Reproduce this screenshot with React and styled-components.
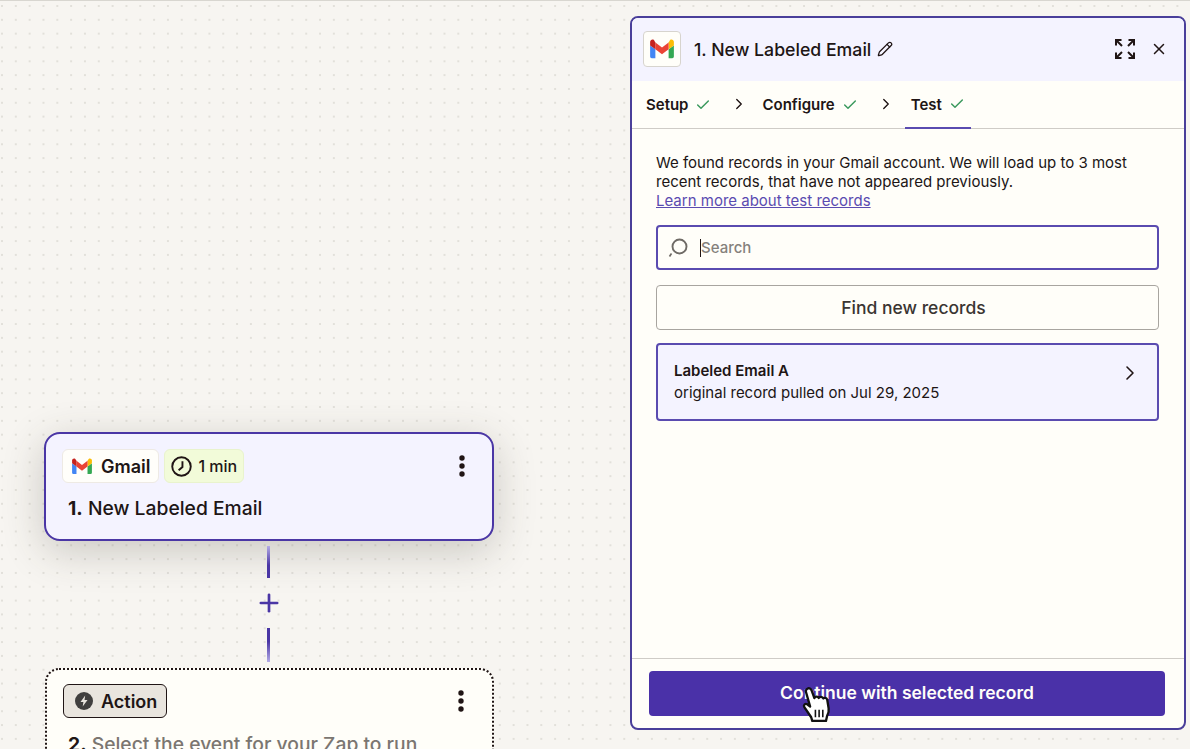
import React from "react";
import styled, { createGlobalStyle } from "styled-components";
import { Check, ChevronRight, Pencil, X, Plus } from "lucide-react";

const GlobalStyle = createGlobalStyle`
  html, body {
    margin: 0;
    padding: 0;
    height: 749px;
    overflow: hidden;
    font-family: Inter, "Liberation Sans", sans-serif;
    color: #201515;
  }
`;

const Page = styled.div`
  display: flex;
  width: 1190px;
  height: 749px;
  overflow: hidden;
  box-sizing: border-box;
  border-top: 1px solid #d8d6d0;
  background-color: #f7f5f1;
  background-image: radial-gradient(circle at 1px 1px, #e2e0da 0.8px, transparent 1.1px);
  background-size: 13.83px 13.83px;
  background-position: 1px 4px;
`;

const Canvas = styled.div`
  width: 630px;
  flex: none;
  box-sizing: border-box;
  padding: 431px 0 0 44px;
`;

const TriggerNode = styled.div`
  width: 450px;
  height: 109px;
  box-sizing: border-box;
  padding: 15px 16px 0 16px;
  background: #f4f3ff;
  border: 2px solid #4a36a5;
  border-radius: 16px;
  box-shadow: 0 10px 42px rgba(60, 55, 40, 0.24);
`;

const NodeTop = styled.div`
  display: flex;
  align-items: center;
  gap: 5px;
`;

const Chip = styled.div`
  display: flex;
  align-items: center;
  height: 34px;
  box-sizing: border-box;
  gap: ${(p) => p.$gap || 8}px;
  padding: 0 ${(p) => p.$padRight || p.$pad || 9}px 0 ${(p) => p.$pad || 9}px;
  border-radius: 6px;
  background: ${(p) => p.$bg || "#fffefa"};
  border: 1px solid ${(p) => p.$line || "#eeeae4"};
  font-size: ${(p) => p.$size || 18}px;
  font-weight: ${(p) => p.$weight || 600};
`;

const MoreButton = styled.div`
  margin-left: auto;
  display: flex;
  margin-right: ${(p) => p.$right || 10}px;
`;

const NodeTitle = styled.div`
  margin: ${(p) => p.$top}px 0 0 ${(p) => p.$left}px;
  font-size: 19.3px;
  font-weight: 500;
  line-height: 24px;
  white-space: nowrap;
  color: ${(p) => (p.$muted ? "#7b7671" : "#201515")};
  b {
    font-weight: 700;
    color: #201515;
  }
`;

const Connector = styled.div`
  width: 450px;
  height: 127px;
  display: flex;
  flex-direction: column;
  align-items: center;
  padding: 5px 1px 0 0;
  box-sizing: border-box;
  color: #4a36a5;
`;

const Line = styled.div`
  width: 3px;
  height: ${(p) => p.$h}px;
  background: linear-gradient(${(p) => p.$dir}, #4a36a5 40%, #b3abe6);
`;

const PlusSlot = styled.div`
  height: 50px;
  display: flex;
  align-items: center;
  justify-content: center;
`;

const ActionNode = styled.div`
  width: 449px;
  height: 130px;
  box-sizing: border-box;
  margin-left: 1px;
  padding: 14px 16px 0 16px;
  background: #fffef9;
  border: 2px dotted #201515;
  border-radius: 14px;
`;

const Panel = styled.aside`
  width: 556px;
  height: 714px;
  margin-top: 15px;
  box-sizing: border-box;
  display: flex;
  flex-direction: column;
  background: #fffef9;
  border: 2px solid #4a3f9a;
  border-radius: 8px;
  overflow: hidden;
`;

const PanelHeader = styled.header`
  height: 62px;
  flex: none;
  display: flex;
  align-items: center;
  padding: 0 16px 1px 11px;
  background: #f4f3ff;
`;

const LogoBox = styled.div`
  width: 38px;
  height: 36px;
  box-sizing: border-box;
  display: flex;
  align-items: center;
  justify-content: center;
  background: #fffef9;
  border: 1px solid #d7d4ce;
  border-radius: 4px;
`;

const PanelTitle = styled.div`
  margin-left: 13px;
  font-size: 17.7px;
  font-weight: 500;
  display: flex;
  align-items: center;
  gap: 6px;
`;

const HeaderActions = styled.div`
  margin-left: auto;
  display: flex;
  align-items: center;
  gap: 15px;
`;

const Tabs = styled.nav`
  height: 48px;
  flex: none;
  box-sizing: border-box;
  display: flex;
  align-items: flex-start;
  border-bottom: 1px solid #cfccc7;
  padding-left: 14px;
`;

const Tab = styled.div`
  display: flex;
  align-items: center;
  gap: 7px;
  height: ${(p) => (p.$active ? 48 : 47)}px;
  box-sizing: border-box;
  padding: ${(p) => (p.$active ? "0 6px 0 6px" : "0")};
  font-size: 15px;
  font-weight: 600;
  color: #201515;
  margin-right: ${(p) => p.$gap || 0}px;
  ${(p) => p.$active && "border-bottom: 2px solid #5a4bb0;"}
`;

const TabArrow = styled.div`
  display: flex;
  align-items: center;
  height: 46px;
  margin-right: ${(p) => p.$gap}px;
`;

const PanelBody = styled.div`
  flex: 1;
  padding: 24px 25px 0 24px;
`;

const Intro = styled.p`
  margin: 0 0 15px;
  font-size: 15px;
  line-height: 19px;
  width: 490px;
  a {
    color: #5a4bb0;
    text-decoration: underline;
  }
`;

const SearchBox = styled.div`
  height: 45px;
  box-sizing: border-box;
  display: flex;
  align-items: center;
  padding-left: 10px;
  border: 2px solid #5a4bb0;
  border-radius: 4px;
  font-size: 15px;
  color: #85817c;
  font-weight: 500;
`;

const Caret = styled.span`
  width: 1px;
  height: 18px;
  margin-left: 11px;
  background: #201515;
`;

const OutlineButton = styled.div`
  height: 45px;
  box-sizing: border-box;
  margin: 15px 0 13px;
  display: flex;
  align-items: center;
  justify-content: center;
  padding-left: 12px;
  border: 1px solid #a8a5a0;
  border-radius: 4px;
  font-size: 17.5px;
  font-weight: 500;
  color: #3a3532;
`;

const RecordCard = styled.div`
  height: 78px;
  box-sizing: border-box;
  display: flex;
  align-items: center;
  justify-content: space-between;
  padding: 0 15px 0 16px;
  background: #f4f3ff;
  border: 2px solid #5a4bb0;
  border-radius: 4px;
  font-size: 15px;
  line-height: 22px;
  strong {
    display: block;
    font-weight: 600;
  }
  svg {
    margin-top: -18px;
  }
`;

const PanelFooter = styled.footer`
  height: 70px;
  flex: none;
  box-sizing: border-box;
  padding: 12px 19px 0 17px;
  border-top: 1px solid #cfccc7;
`;

const PrimaryButton = styled.div`
  position: relative;
  height: 45px;
  box-sizing: border-box;
  padding-bottom: 2px;
  display: flex;
  align-items: center;
  justify-content: center;
  background: #4a31a8;
  border-radius: 4px;
  color: #fffef9;
  font-size: 17.5px;
  font-weight: 600;
`;

const HandCursor = styled.svg`
  position: absolute;
  left: 151px;
  top: 15px;
`;

const GmailLogo = ({ size = 20 }) => (
  <svg width={size} height={size * 0.8} viewBox="0 0 52 42">
    <path fill="#4285f4" d="M3.5 42h8V22.5L0 14v24.5A3.5 3.5 0 0 0 3.5 42z" />
    <path fill="#34a853" d="M40.5 42h8a3.5 3.5 0 0 0 3.5-3.5V14l-11.500 8.500z" />
    <path fill="#fbbc04" d="M40.500 7.500v15L52 14V6.500c0-4.300-4.900-6.800-8.400-4.200z" />
    <path fill="#ea4335" d="M11.500 22.500v-15L26 18.400 40.500 7.500v15L26 33.400z" />
    <path fill="#c5221f" d="M0 6.500V14l11.500 8.500v-15L8.400 2.300C4.900-.3 0 2.200 0 6.500z" />
  </svg>
);

const MoreIcon = () => (
  <svg width="8" height="22" viewBox="0 0 8 22" fill="#201515">
    <circle cx="4" cy="3" r="2.700" />
    <circle cx="4" cy="11" r="2.700" />
    <circle cx="4" cy="19" r="2.700" />
  </svg>
);

const ClockIcon = () => (
  <svg width="21" height="21" viewBox="0 0 22 22" fill="none" stroke="#201515" strokeWidth="2">
    <circle cx="11" cy="11" r="9.700" />
    <path d="M12 5.500V11.500L8 15" />
  </svg>
);

const BoltBadge = () => (
  <svg width="18" height="18" viewBox="0 0 18 18">
    <circle cx="9" cy="9" r="9" fill="#403f3e" />
    <path fill="#e9e5de" d="M10.200 3.500 5.500 10h2.900l-.7 4.500L12.500 8H9.500z" />
  </svg>
);

const ExpandIcon = () => (
  <svg width="20" height="20" viewBox="0 0 20 20" fill="none" stroke="#201515" strokeWidth="2">
    <path d="M1 6.500V1h5.500M1.500 1.500 7 7" />
    <path d="M19 6.500V1h-5.500M18.500 1.500 13 7" />
    <path d="M1 13.500V19h5.500M1.500 18.500 7 13" />
    <path d="M19 13.500V19h-5.500M18.500 18.500 13 13" />
  </svg>
);

const SearchIcon = () => (
  <svg width="21" height="20" viewBox="0 0 21 20" fill="none" stroke="#6f6b66">
    <circle cx="11.500" cy="8.500" r="7" strokeWidth="1.900" />
    <path d="M3.500 15.500 1.500 18.500" strokeWidth="1.700" />
  </svg>
);

const HandIcon = () => (
  <HandCursor width="34" height="38" viewBox="0 0 32 36">
    <path
      fill="#fff"
      stroke="#111"
      strokeWidth="2.200"
      strokeLinejoin="round"
      d="M7 2.500c1.600-1 3.200 0 3.800 1.500l2.700 7.500c.6-1.800 3.400-2 4.200-.2.800-1.500 3.500-1.500 4.200.5.900-1 3.300-.7 3.800 1.300l1.300 8c.5 3-.3 5.500-1.500 7.500l-1 4.500H11.500l-1-3.500-6.500-9.500c-1.200-1.800.8-4 2.700-2.800l2.800 2.200L5.500 5.500C5.100 4.300 5.900 3.200 7 2.500z"
    />
    <path stroke="#111" strokeWidth="1.500" d="M14.500 22.500v7M18 22.500v7M21.500 22.500v7" />
  </HandCursor>
);

const App = () => (
  <Page>
    <GlobalStyle />
    <Canvas>
      <TriggerNode>
        <NodeTop>
          <Chip $padRight={8} $gap={9}>
            <GmailLogo />
            Gmail
          </Chip>
          <Chip $bg="#f2fbd9" $line="#e9f3cd" $size={16} $weight={500} $gap={6} $pad={6}>
            <ClockIcon />1 min
          </Chip>
          <MoreButton>
            <MoreIcon />
          </MoreButton>
        </NodeTop>
        <NodeTitle $top={13} $left={6}>
          <b>1.</b> New Labeled Email
        </NodeTitle>
      </TriggerNode>
      <Connector>
        <Line $h={32} $dir="to top" />
        <PlusSlot>
          <Plus size={28} strokeWidth={2.300} />
        </PlusSlot>
        <Line $h={34} $dir="to bottom" />
      </Connector>
      <ActionNode>
        <NodeTop>
          <Chip $bg="#e9e5de" $line="#201515" $pad={11} $padRight={9} $gap={8}>
            <BoltBadge />
            Action
          </Chip>
          <MoreButton $right={11}>
            <MoreIcon />
          </MoreButton>
        </NodeTop>
        <NodeTitle $muted $top={14} $left={5}>
          <b>2.</b> Select the event for your Zap to run
        </NodeTitle>
      </ActionNode>
    </Canvas>
    <Panel>
      <PanelHeader>
        <LogoBox>
          <GmailLogo size={24} />
        </LogoBox>
        <PanelTitle>
          <span>1. New Labeled Email</span>
          <Pencil size={16} strokeWidth={1.900} />
        </PanelTitle>
        <HeaderActions>
          <ExpandIcon />
          <X size={18} strokeWidth={2} />
        </HeaderActions>
      </PanelHeader>
      <Tabs>
        <Tab $gap={19}>
          Setup <Check size={16} color="#3c9a5f" strokeWidth={2.200} />
        </Tab>
        <TabArrow $gap={14}>
          <ChevronRight size={18} strokeWidth={1.800} />
        </TabArrow>
        <Tab $gap={19}>
          Configure <Check size={16} color="#3c9a5f" strokeWidth={2.200} />
        </Tab>
        <TabArrow $gap={10}>
          <ChevronRight size={18} strokeWidth={1.800} />
        </TabArrow>
        <Tab $active>
          Test <Check size={16} color="#3c9a5f" strokeWidth={2.200} />
        </Tab>
      </Tabs>
      <PanelBody>
        <Intro>
          We found records in your Gmail account. We will load up to 3 most recent records, that
          have not appeared previously.
          <br />
          <a href="#test-records">Learn more about test records</a>
        </Intro>
        <SearchBox>
          <SearchIcon />
          <Caret />
          Search
        </SearchBox>
        <OutlineButton>Find new records</OutlineButton>
        <RecordCard>
          <div>
            <strong>Labeled Email A</strong>
            original record pulled on Jul 29, 2025
          </div>
          <ChevronRight size={24} strokeWidth={1.600} />
        </RecordCard>
      </PanelBody>
      <PanelFooter>
        <PrimaryButton>
          Continue with selected record
          <HandIcon />
        </PrimaryButton>
      </PanelFooter>
    </Panel>
  </Page>
);

export default App;
